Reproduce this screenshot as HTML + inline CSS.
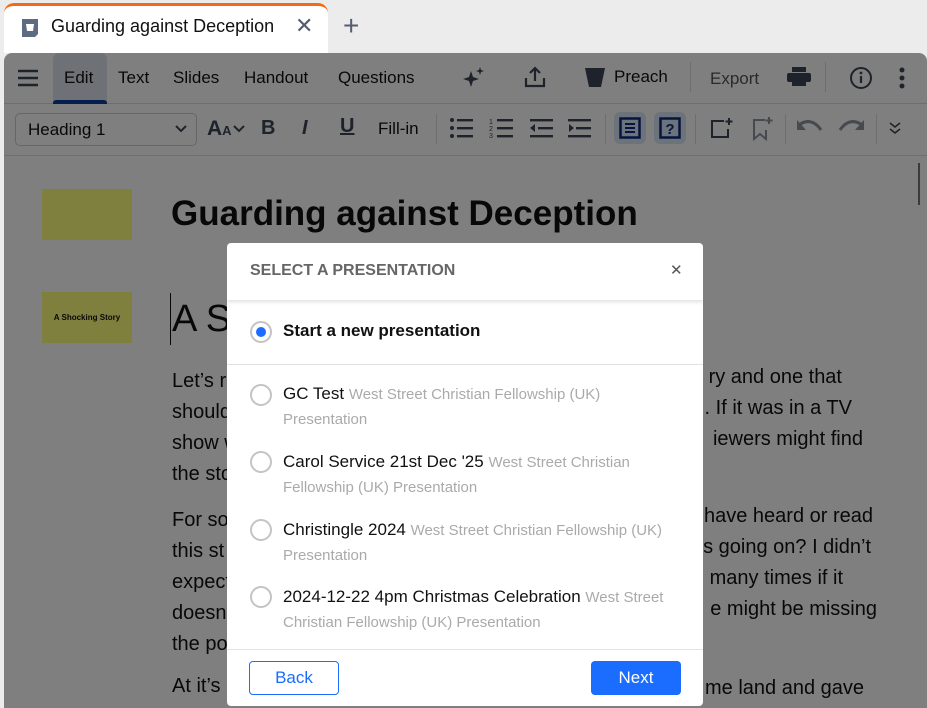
<!DOCTYPE html>
<html><head><meta charset="utf-8"><style>
*{box-sizing:border-box;margin:0;padding:0}
body{width:927px;height:708px;overflow:hidden;background:#ececec;font-family:"Liberation Sans",sans-serif;position:relative;color:#111}
.abs{position:absolute}
.tb{font-size:17px;color:#111}
.body{font-size:20px;color:#111;white-space:nowrap}
.radio{position:absolute;width:22px;height:22px;border:2px solid #c4c4c4;border-radius:50%;background:#fff}
.it{position:absolute;left:56px;font-size:17px;color:#111;line-height:24px;width:410px}
.it span{color:#aaa;font-size:15px}
</style></head><body>
<div class="abs" style="left:4px;top:3px;width:324px;height:50px;background:#fff;border-radius:10px 10px 0 0;border-top:3px solid #f26a12"></div>
<svg class="abs" style="left:21px;top:18px" width="18" height="20"><path d="M1 1h16v15l-3 3H1z" fill="#5f6b80"/><path d="M5 6h8l-1 7H6z" fill="#fff"/></svg>
<div class="abs" style="left:51px;top:16px;font-size:18px;color:#111">Guarding against Deception</div>
<div class="abs" style="left:295px;top:13px;font-size:22px;color:#555e6e">✕</div>
<div class="abs" style="left:343px;top:10px;font-size:28px;color:#555e6e">+</div>
<div class="abs" style="left:4px;top:53px;width:923px;height:655px;background:#fff;border-radius:8px 8px 0 0"></div>
<div class="abs" style="left:4px;top:103px;width:923px;height:1px;background:#ddd"></div>
<div class="abs" style="left:4px;top:155px;width:923px;height:1px;background:#ddd"></div>
<div class="abs" style="left:53px;top:53px;width:54px;height:50px;background:#dde4ef;border-radius:6px 6px 0 0"></div>
<div class="abs" style="left:53px;top:100px;width:54px;height:4px;background:#0a3a9e;border-radius:3px 3px 0 0"></div>
<svg class="abs" style="left:18px;top:69px" width="20" height="18"><path d="M0 2h20M0 9h20M0 16h20" stroke="#3c4656" stroke-width="2.5"/></svg>
<div class="abs tb" style="left:64px;top:68px">Edit</div>
<div class="abs tb" style="left:118px;top:68px">Text</div>
<div class="abs tb" style="left:173px;top:68px">Slides</div>
<div class="abs tb" style="left:244px;top:68px">Handout</div>
<div class="abs tb" style="left:338px;top:68px">Questions</div>
<svg class="abs" style="left:462px;top:66px" width="24" height="22"><path d="M9 5l2 6 6 2-6 2-2 6-2-6-6-2 6-2z" fill="#3c4656"/><path d="M18 1l1 3 3 1-3 1-1 3-1-3-3-1 3-1z" fill="#3c4656"/></svg>
<svg class="abs" style="left:524px;top:66px" width="22" height="22"><path d="M11 15V2M6 7l5-5 5 5M2 12v8h18v-8" fill="none" stroke="#3c4656" stroke-width="2.2"/></svg>
<svg class="abs" style="left:585px;top:67px" width="20" height="20"><path d="M0 1h20l-4 19H4z" fill="#3c4656"/></svg>
<div class="abs tb" style="left:614px;top:67px">Preach</div>
<div class="abs" style="left:690px;top:62px;width:1px;height:30px;background:#ddd"></div>
<div class="abs tb" style="left:710px;top:69px;color:#555">Export</div>
<svg class="abs" style="left:787px;top:67px" width="24" height="20"><rect x="5" y="0" width="14" height="5" fill="#3c4656"/><rect x="0" y="6" width="24" height="9" rx="2" fill="#3c4656"/><rect x="5" y="13" width="14" height="6" fill="#3c4656"/></svg>
<div class="abs" style="left:825px;top:62px;width:1px;height:30px;background:#ddd"></div>
<svg class="abs" style="left:849px;top:66px" width="24" height="24"><circle cx="12" cy="12" r="10" fill="none" stroke="#3c4656" stroke-width="2"/><path d="M12 10v7" stroke="#3c4656" stroke-width="2.2"/><circle cx="12" cy="7" r="1.4" fill="#3c4656"/></svg>
<svg class="abs" style="left:898px;top:66px" width="8" height="24"><circle cx="4" cy="4" r="2.5" fill="#3c4656"/><circle cx="4" cy="12" r="2.5" fill="#3c4656"/><circle cx="4" cy="20" r="2.5" fill="#3c4656"/></svg>
<div class="abs" style="left:15px;top:113px;width:182px;height:33px;border:1px solid #ccc;border-radius:5px"></div>
<div class="abs" style="left:28px;top:120px;font-size:17px">Heading 1</div>
<svg class="abs" style="left:175px;top:125px" width="12" height="8"><path d="M1 1l5 5 5-5" fill="none" stroke="#3c4656" stroke-width="2"/></svg>
<div class="abs" style="left:207px;top:117px;font-size:21px;font-weight:bold;color:#3c4656">A<span style="font-size:13px">A</span></div>
<svg class="abs" style="left:233px;top:125px" width="12" height="8"><path d="M1 1l5 5 5-5" fill="none" stroke="#3c4656" stroke-width="2"/></svg>
<div class="abs" style="left:261px;top:117px;font-size:20px;font-weight:bold;color:#3c4656">B</div>
<div class="abs" style="left:302px;top:117px;font-size:20px;font-weight:bold;font-style:italic;color:#3c4656">I</div>
<div class="abs" style="left:340px;top:115px;font-size:20px;font-weight:bold;text-decoration:underline;color:#3c4656">U</div>
<div class="abs" style="left:378px;top:119px;font-size:17px">Fill-in</div>
<div class="abs" style="left:436px;top:114px;width:1px;height:30px;background:#ddd"></div>
<svg class="abs" style="left:450px;top:118px" width="24" height="20"><g fill="#3c4656"><circle cx="2" cy="2" r="2"/><circle cx="2" cy="10" r="2"/><circle cx="2" cy="18" r="2"/><rect x="7" y="1" width="16" height="2.4"/><rect x="7" y="9" width="16" height="2.4"/><rect x="7" y="17" width="16" height="2.4"/></g></svg>
<svg class="abs" style="left:489px;top:117px" width="24" height="22"><g fill="#3c4656"><rect x="8" y="2" width="16" height="2.4"/><rect x="8" y="10" width="16" height="2.4"/><rect x="8" y="18" width="16" height="2.4"/></g><text x="0" y="7" font-size="7" fill="#3c4656">1</text><text x="0" y="14" font-size="7" fill="#3c4656">2</text><text x="0" y="21" font-size="7" fill="#3c4656">3</text></svg>
<svg class="abs" style="left:530px;top:118px" width="24" height="20"><g fill="#3c4656"><rect x="0" y="1" width="23" height="2.4"/><rect x="8" y="9" width="15" height="2.4"/><rect x="0" y="17" width="23" height="2.4"/><path d="M0 10l5-4v8z"/></g></svg>
<svg class="abs" style="left:568px;top:118px" width="24" height="20"><g fill="#3c4656"><rect x="0" y="1" width="23" height="2.4"/><rect x="8" y="9" width="15" height="2.4"/><rect x="0" y="17" width="23" height="2.4"/><path d="M6 10l-5-4v8z"/></g></svg>
<div class="abs" style="left:605px;top:114px;width:1px;height:30px;background:#ddd"></div>
<div class="abs" style="left:614px;top:112px;width:32px;height:32px;background:#dbe6f7;border-radius:6px"></div>
<svg class="abs" style="left:619px;top:117px" width="22" height="22"><rect x="1.5" y="1.5" width="19" height="19" fill="none" stroke="#0a2a7e" stroke-width="2.5"/><path d="M6 7h10M6 11h10M6 15h10" stroke="#0a2a7e" stroke-width="2"/></svg>
<div class="abs" style="left:654px;top:112px;width:32px;height:32px;background:#dbe6f7;border-radius:6px"></div>
<svg class="abs" style="left:659px;top:117px" width="22" height="22"><rect x="1.5" y="1.5" width="19" height="19" fill="none" stroke="#0a2a7e" stroke-width="2.5"/><text x="11" y="17" font-size="15" font-weight="bold" text-anchor="middle" fill="#0a2a7e" font-family="Liberation Sans">?</text></svg>
<div class="abs" style="left:695px;top:114px;width:1px;height:30px;background:#ddd"></div>
<svg class="abs" style="left:710px;top:117px" width="24" height="22"><path d="M14 4H2v16h16v-8" fill="none" stroke="#3c4656" stroke-width="2"/><path d="M19 1v7M15.5 4.5h7" stroke="#3c4656" stroke-width="2"/></svg>
<svg class="abs" style="left:752px;top:117px" width="22" height="24"><path d="M13 3H2v19l6-5 6 5v-9" fill="none" stroke="#8a93a0" stroke-width="2"/><path d="M17 0v7M13.5 3.5h7" stroke="#8a93a0" stroke-width="2"/></svg>
<div class="abs" style="left:785px;top:114px;width:1px;height:30px;background:#ddd"></div>
<svg class="abs" style="left:797px;top:119px" width="26" height="16"><path d="M2 6c8-6 16-4 22 5" fill="none" stroke="#8a93a0" stroke-width="3"/><path d="M0 1v10h9z" fill="#8a93a0"/></svg>
<svg class="abs" style="left:838px;top:119px" width="26" height="16"><path d="M24 6c-8-6-16-4-22 5" fill="none" stroke="#8a93a0" stroke-width="3"/><path d="M26 1v10h-9z" fill="#8a93a0"/></svg>
<div class="abs" style="left:876px;top:114px;width:1px;height:30px;background:#ddd"></div>
<svg class="abs" style="left:888px;top:121px" width="14" height="14"><path d="M2 2l5 4 5-4M2 8l5 4 5-4" fill="none" stroke="#3c4656" stroke-width="1.6"/></svg>
<div class="abs" style="left:918px;top:163px;width:2px;height:42px;background:#777"></div>
<div class="abs" style="left:42px;top:189px;width:90px;height:51px;background:#fefe7c"></div>
<div class="abs" style="left:42px;top:292px;width:90px;height:51px;background:#fefe7c;font-size:8px;font-weight:bold;text-align:center;line-height:51px">A Shocking Story</div>
<div class="abs" style="left:171px;top:194px;font-size:35px;font-weight:bold;white-space:nowrap">Guarding against Deception</div>
<div class="abs" style="left:170px;top:293px;width:1px;height:52px;background:#111"></div>
<div class="abs" style="left:172px;top:298px;font-size:38px;color:#111">A S</div>
<div class="abs body" style="left:172px;top:366px;line-height:31px">Let’s r<br>should<br>show w<br>the sto</div>
<div class="abs body" style="left:172px;top:505px;line-height:31px">For so<br>this st<br>expect<br>doesn<br>the po</div>
<div class="abs body" style="left:172px;top:675px">At it’s</div>
<div class="abs body" style="right:85px;top:366px">ry and one that</div>
<div class="abs body" style="right:75px;top:397px">. If it was in a TV</div>
<div class="abs body" style="right:64px;top:428px">iewers might find</div>
<div class="abs body" style="right:54px;top:505px">have heard or read</div>
<div class="abs body" style="right:56px;top:536px">s going on? I didn’t</div>
<div class="abs body" style="right:84px;top:567px">many times if it</div>
<div class="abs body" style="right:50px;top:598px">e might be missing</div>
<div class="abs body" style="right:63px;top:677px">me land and gave</div>
<div class="abs" style="left:4px;top:53px;width:923px;height:655px;background:rgba(0,0,0,.5);border-radius:8px 8px 0 0"></div>
<div class="abs" style="left:227px;top:243px;width:476px;height:463px;background:#fff;border-radius:4px;overflow:hidden">
 <div class="abs" style="left:0;top:0;width:476px;height:57px;box-shadow:0 2px 4px rgba(0,0,0,.12)"></div>
 <div class="abs" style="left:23px;top:19px;font-size:16px;font-weight:bold;color:#666">SELECT A PRESENTATION</div>
 <div class="abs" style="left:443px;top:18px;font-size:15px;color:#555">✕</div>
 <div class="radio" style="left:23px;top:78px"></div>
 <div class="abs" style="left:29px;top:84px;width:10px;height:10px;border-radius:50%;background:#1a6dff"></div>
 <div class="abs" style="left:56px;top:78px;font-size:17px;font-weight:bold">Start a new presentation</div>
 <div class="abs" style="left:0;top:121px;width:476px;height:1px;background:#e2e2e2"></div>
 <div class="radio" style="left:23px;top:141px"></div>
 <div class="it" style="top:139px;width:330px">GC Test <span>West Street Christian Fellowship (UK) Presentation</span></div>
 <div class="radio" style="left:23px;top:208px"></div>
 <div class="it" style="top:207px">Carol Service 21st Dec '25 <span>West Street Christian Fellowship (UK) Presentation</span></div>
 <div class="radio" style="left:23px;top:276px"></div>
 <div class="it" style="top:275px">Christingle 2024 <span>West Street Christian Fellowship (UK) Presentation</span></div>
 <div class="radio" style="left:23px;top:343px"></div>
 <div class="it" style="top:342px">2024-12-22 4pm Christmas Celebration <span>West Street Christian Fellowship (UK) Presentation</span></div>
 <div class="abs" style="left:0;top:406px;width:476px;height:1px;background:#e2e2e2"></div>
 <div class="abs" style="left:22px;top:418px;width:90px;height:34px;border:1px solid #1a6dff;border-radius:4px;color:#1a6dff;font-size:17px;text-align:center;line-height:32px">Back</div>
 <div class="abs" style="left:364px;top:418px;width:90px;height:34px;background:#1a6dff;border-radius:4px;color:#fff;font-size:17px;text-align:center;line-height:34px">Next</div>
</div>
</body></html>
